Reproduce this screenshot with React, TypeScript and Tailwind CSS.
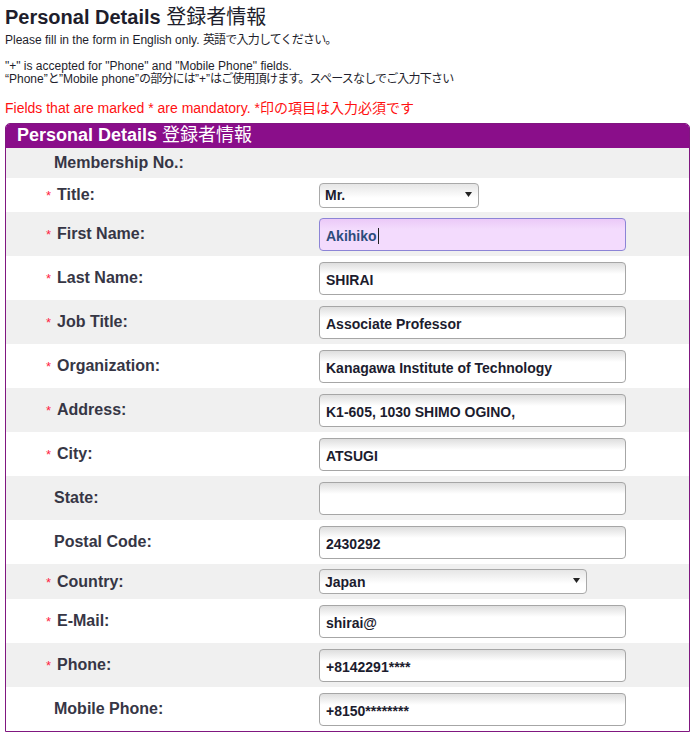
import React from 'react';

const FONT = '"Liberation Sans", "Noto Sans CJK JP", Arial, sans-serif';

type Field = {
  label: string;
  required?: boolean;
  value?: string;
  kind?: 'text' | 'select' | 'focused' | 'none';
  selectWidth?: string;
  height: string;
  gray: boolean;
};

const fields: Field[] = [
  { label: 'Membership No.:', kind: 'none', height: 'h-[30px]', gray: true },
  { label: 'Title:', required: true, value: 'Mr.', kind: 'select', selectWidth: 'w-[160px]', height: 'h-[34px]', gray: false },
  { label: 'First Name:', required: true, value: 'Akihiko', kind: 'focused', height: 'h-[44px]', gray: true },
  { label: 'Last Name:', required: true, value: 'SHIRAI', height: 'h-[44px]', gray: false },
  { label: 'Job Title:', required: true, value: 'Associate Professor', height: 'h-[44px]', gray: true },
  { label: 'Organization:', required: true, value: 'Kanagawa Institute of Technology', height: 'h-[44px]', gray: false },
  { label: 'Address:', required: true, value: 'K1-605, 1030 SHIMO OGINO,', height: 'h-[44px]', gray: true },
  { label: 'City:', required: true, value: 'ATSUGI', height: 'h-[44px]', gray: false },
  { label: 'State:', value: '', height: 'h-[44px]', gray: true },
  { label: 'Postal Code:', value: '2430292', height: 'h-[44px]', gray: false },
  { label: 'Country:', required: true, value: 'Japan', kind: 'select', selectWidth: 'w-[268px]', height: 'h-[35px]', gray: true },
  { label: 'E-Mail:', required: true, value: 'shirai@', height: 'h-[44px]', gray: false },
  { label: 'Phone:', required: true, value: '+8142291****', height: 'h-[44px]', gray: true },
  { label: 'Mobile Phone:', value: '+8150********', height: 'h-[44px]', gray: false },
];

const Arrow = () => (
  <svg width="7" height="5" viewBox="0 0 7 5" className="pointer-events-none absolute right-[7px] top-[9px]">
    <path d="M0 0h7L3.5 5z" fill="#222" />
  </svg>
);

// japanese runs are set a little tighter to match the proportional gothic in the original
const Jp = ({ children, className = '' }: { children: React.ReactNode; className?: string }) => (
  <span className={`font-normal tracking-[-0.8px] ${className}`}>{children}</span>
);

const FieldControl = ({ field }: { field: Field }) => {
  if (field.kind === 'none') return null;

  if (field.kind === 'select') {
    return (
      <div className={`relative ${field.selectWidth}`}>
        <select
          defaultValue={field.value}
          className="w-full h-[25px] appearance-none rounded-[4px] border border-[#a9a9a9] bg-[linear-gradient(to_bottom,#e6e6e6,#ffffff_14px)] pl-[5px] pt-[1px] text-[14px] font-bold text-[#1c1c2e] outline-none"
          style={{ fontFamily: FONT }}
        >
          <option>{field.value}</option>
        </select>
        <Arrow />
      </div>
    );
  }

  if (field.kind === 'focused') {
    return (
      <div className="flex items-center w-[307px] h-[33px] rounded-[4px] border border-[#8c84d6] bg-[linear-gradient(to_bottom,#ebc9f8,#f3dbfd_10px)] pl-[6px] pt-[4px] text-[14px] font-bold text-[#2d4c7c]">
        {field.value}
        <span className="inline-block w-px h-[16px] bg-[#222] ml-px" />
      </div>
    );
  }

  return (
    <input
      readOnly
      defaultValue={field.value}
      className="w-[307px] h-[33px] rounded-[4px] border border-[#a6a6a6] bg-[linear-gradient(to_bottom,#dedede,#ffffff_11px)] pl-[6px] pt-[4px] text-[14px] font-bold text-[#1c1c2e] outline-none"
      style={{ fontFamily: FONT }}
    />
  );
};

export default function App() {
  return (
    <div className="w-[699px] min-h-[739px] bg-white pl-[5px] pt-[5px] text-[#1e1e2c]" style={{ fontFamily: FONT }}>
      <h1 className="text-[20px] leading-[24px] font-bold">
        Personal Details <Jp className="tracking-[0px]">登録者情報</Jp>
      </h1>
      <p className="mt-[4px] text-[12px] leading-[14px]">
        Please fill in the form in English only. <Jp>英語で入力してください。</Jp>
      </p>
      <p className="mt-[13px] text-[12px] leading-[13px]">
        "+" is accepted for "Phone" and "Mobile Phone" fields.
        <br />
        “Phone”<Jp>と</Jp>”Mobile phone”<Jp>の部分には</Jp>”+”<Jp>はご使用頂けます。スペースなしでご入力下さい</Jp>
      </p>
      <p className="mt-[14px] text-[14px] leading-[16px] text-[#ff1111]">
        Fields that are marked * are mandatory. *<Jp className="tracking-[0px]">印の項目は入力必須です</Jp>
      </p>

      <div className="mt-[7px] w-[685px] rounded-t-[5px] overflow-hidden border border-[#801780]">
        <div className="h-[24px] bg-[#8a0e8a] pl-[11px] text-[18px] leading-[23px] font-bold text-white">
          Personal Details <Jp className="tracking-[0px]">登録者情報</Jp>
        </div>
        {fields.map((f) => (
          <div
            key={f.label}
            className={`grid grid-cols-[313px_1fr] items-center ${f.height} ${f.gray ? 'bg-[#f0f0f0]' : 'bg-white'}`}
          >
            <div className="flex items-baseline pl-[40px] text-[16px] font-bold text-[#363645]">
              {f.required ? (
                <span className="w-[11px] text-[13px] font-normal text-[#ff2244]">*</span>
              ) : (
                <span className="w-[8px]" />
              )}
              <span>{f.label}</span>
            </div>
            <div>
              <FieldControl field={f} />
            </div>
          </div>
        ))}
      </div>
    </div>
  );
}
